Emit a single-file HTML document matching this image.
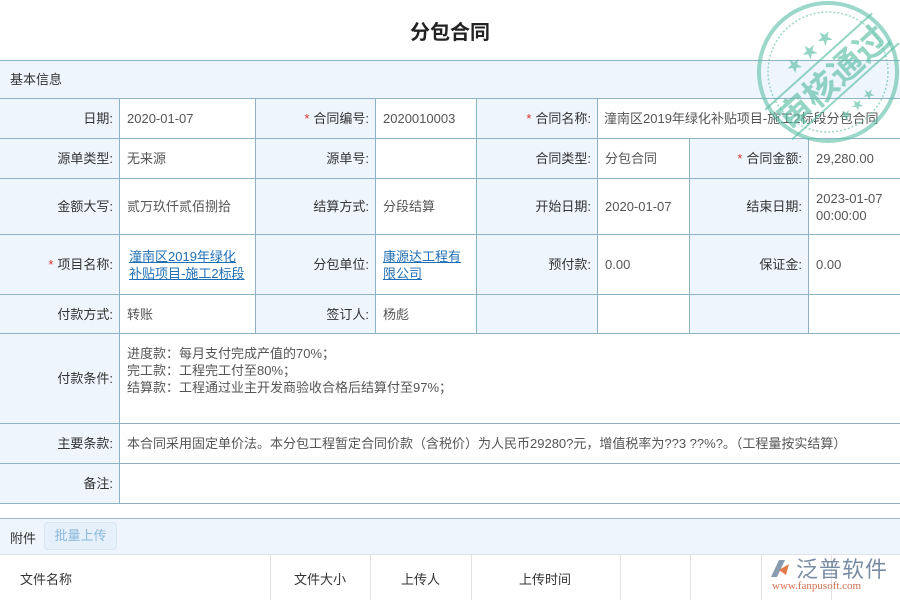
<!DOCTYPE html>
<html><head><meta charset="utf-8"><style>
body{margin:0;width:900px;height:600px;overflow:hidden;background:#fff;font-family:"Liberation Sans","Noto Sans CJK SC",sans-serif;font-size:13px;color:#333;position:relative}
.c{position:absolute;box-sizing:border-box;border:1px solid #8fb3c6;display:flex;align-items:center;line-height:17px}
.l{background:#eef5fd;justify-content:flex-end;padding-right:6px;color:#333}
.v{background:#fff;padding-left:7px;color:#555}
.s{color:#d33;margin-right:4px}
a{color:#1f6fb5;text-decoration:underline}
.h{position:absolute;top:555px;height:45px;border-left:1px solid #e3e3e3;}
</style></head><body>
<div style="position:absolute;top:16px;left:0;width:900px;text-align:center;font-size:20px;font-weight:bold;color:#222">分包合同</div>
<div class="c" style="left:-1px;top:60px;width:902px;height:39px;background:#eef5fd;padding-left:10px;color:#333">基本信息</div>

<div class="c l" style="left:-1px;top:98px;width:121px;height:41px">日期:</div>
<div class="c v" style="left:119px;top:98px;width:137px;height:41px">2020-01-07</div>
<div class="c l" style="left:255px;top:98px;width:121px;height:41px"><span class="s">*</span>合同编号:</div>
<div class="c v" style="left:375px;top:98px;width:102px;height:41px">2020010003</div>
<div class="c l" style="left:476px;top:98px;width:122px;height:41px"><span class="s">*</span>合同名称:</div>
<div class="c v" style="left:597px;top:98px;width:304px;height:41px;padding-left:6px;white-space:nowrap">潼南区2019年绿化补贴项目-施工2标段分包合同</div>

<div class="c l" style="left:-1px;top:138px;width:121px;height:41px">源单类型:</div>
<div class="c v" style="left:119px;top:138px;width:137px;height:41px">无来源</div>
<div class="c l" style="left:255px;top:138px;width:121px;height:41px">源单号:</div>
<div class="c v" style="left:375px;top:138px;width:102px;height:41px"></div>
<div class="c l" style="left:476px;top:138px;width:122px;height:41px">合同类型:</div>
<div class="c v" style="left:597px;top:138px;width:93px;height:41px">分包合同</div>
<div class="c l" style="left:689px;top:138px;width:120px;height:41px"><span class="s">*</span>合同金额:</div>
<div class="c v" style="left:808px;top:138px;width:93px;height:41px">29,280.00</div>

<div class="c l" style="left:-1px;top:178px;width:121px;height:57px">金额大写:</div>
<div class="c v" style="left:119px;top:178px;width:137px;height:57px">贰万玖仟贰佰捌拾</div>
<div class="c l" style="left:255px;top:178px;width:121px;height:57px">结算方式:</div>
<div class="c v" style="left:375px;top:178px;width:102px;height:57px">分段结算</div>
<div class="c l" style="left:476px;top:178px;width:122px;height:57px">开始日期:</div>
<div class="c v" style="left:597px;top:178px;width:93px;height:57px">2020-01-07</div>
<div class="c l" style="left:689px;top:178px;width:120px;height:57px">结束日期:</div>
<div class="c v" style="left:808px;top:178px;width:93px;height:57px">2023-01-07<br>00:00:00</div>

<div class="c l" style="left:-1px;top:234px;width:121px;height:61px"><span class="s">*</span>项目名称:</div>
<div class="c v" style="left:119px;top:234px;width:137px;height:61px;padding-left:9px"><a>潼南区2019年绿化<br>补贴项目-施工2标段</a></div>
<div class="c l" style="left:255px;top:234px;width:121px;height:61px">分包单位:</div>
<div class="c v" style="left:375px;top:234px;width:102px;height:61px"><a>康源达工程有<br>限公司</a></div>
<div class="c l" style="left:476px;top:234px;width:122px;height:61px">预付款:</div>
<div class="c v" style="left:597px;top:234px;width:93px;height:61px">0.00</div>
<div class="c l" style="left:689px;top:234px;width:120px;height:61px">保证金:</div>
<div class="c v" style="left:808px;top:234px;width:93px;height:61px">0.00</div>

<div class="c l" style="left:-1px;top:294px;width:121px;height:40px">付款方式:</div>
<div class="c v" style="left:119px;top:294px;width:137px;height:40px">转账</div>
<div class="c l" style="left:255px;top:294px;width:121px;height:40px">签订人:</div>
<div class="c v" style="left:375px;top:294px;width:102px;height:40px">杨彪</div>
<div class="c l" style="left:476px;top:294px;width:122px;height:40px"></div>
<div class="c v" style="left:597px;top:294px;width:93px;height:40px"></div>
<div class="c l" style="left:689px;top:294px;width:120px;height:40px"></div>
<div class="c v" style="left:808px;top:294px;width:93px;height:40px"></div>

<div class="c l" style="left:-1px;top:333px;width:121px;height:91px">付款条件:</div>
<div class="c v" style="left:119px;top:333px;width:782px;height:91px;align-items:flex-start;padding-top:11px">进度款：每月支付完成产值的70%；<br>完工款：工程完工付至80%；<br>结算款：工程通过业主开发商验收合格后结算付至97%；</div>

<div class="c l" style="left:-1px;top:423px;width:121px;height:41px">主要条款:</div>
<div class="c v" style="left:119px;top:423px;width:782px;height:41px;white-space:nowrap">本合同采用固定单价法。本分包工程暂定合同价款（含税价）为人民币29280?元，增值税率为??3 ??%?。（工程量按实结算）</div>

<div class="c l" style="left:-1px;top:463px;width:121px;height:41px">备注:</div>
<div class="c v" style="left:119px;top:463px;width:782px;height:41px"></div>

<div style="position:absolute;left:0;top:518px;width:900px;height:37px;background:#eef5fd;border-top:1px solid #9ebccc;border-bottom:1px solid #dde4ea;box-sizing:border-box"></div>
<div style="position:absolute;left:10px;top:528px">附件</div>
<div style="position:absolute;left:44px;top:522px;width:73px;height:28px;border:1px solid #d6e6f3;border-radius:4px;background:#e6f0fa;color:#8ab8dc;box-sizing:border-box;text-align:center;line-height:26px">批量上传</div>
<div style="position:absolute;left:20px;top:569px">文件名称</div>
<div style="position:absolute;left:294px;top:569px">文件大小</div>
<div style="position:absolute;left:401px;top:569px">上传人</div>
<div style="position:absolute;left:519px;top:569px">上传时间</div>
<div class="h" style="left:270px"></div><div class="h" style="left:370px"></div><div class="h" style="left:471px"></div><div class="h" style="left:620px"></div><div class="h" style="left:690px"></div><div class="h" style="left:761px"></div><div class="h" style="left:831px"></div>

<div style="position:absolute;left:768px;top:557px;width:24px;height:24px">
<svg width="24" height="24"><path d="M3 20 L11 3 L17 3 L9 20Z" fill="#8a9bb0"/><path d="M11 13 L21 7 L18 18Z" fill="#e07a4a"/></svg></div>
<div style="position:absolute;left:796px;top:552px;font-size:22px;color:#7a8ca4;letter-spacing:1px">泛普软件</div>
<div style="position:absolute;left:772px;top:580px;font-size:11px;color:#d07050;font-family:'Liberation Serif',serif">www.fanpusoft.com</div>

<svg style="position:absolute;left:746px;top:-8px" width="160" height="160" viewBox="0 0 160 160">
<g opacity="0.6" fill="none" stroke="#5cbfa6">
<circle cx="82" cy="80" r="69" stroke-width="4"/><circle cx="82" cy="80" r="60" stroke-width="1.5" stroke-dasharray="2 2"/>
</g>
<g transform="rotate(-42 82 80)" opacity="0.65" fill="#5cbfa6">
<line x1="10" y1="66" x2="154" y2="66" stroke="#5cbfa6" stroke-width="2"/>
<line x1="10" y1="106" x2="154" y2="106" stroke="#5cbfa6" stroke-width="2"/>
<text x="82" y="100" text-anchor="middle" font-size="34" font-weight="bold" font-family="Noto Sans CJK SC,sans-serif">审核通过</text>
<text x="82" y="58" text-anchor="middle" font-size="16">★ ★ ★</text>
<text x="82" y="128" text-anchor="middle" font-size="12">★ ★ ★</text></g>
</svg>
</body></html>
